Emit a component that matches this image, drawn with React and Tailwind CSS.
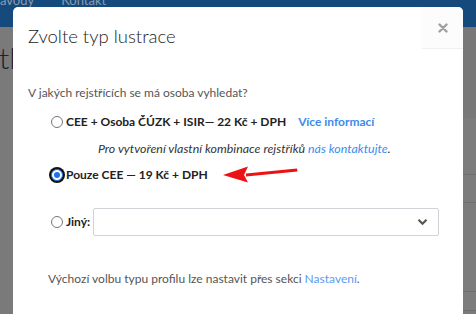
import React from "react";

function Radio({ checked }) {
  if (checked) {
    return (
      <span className="w-[17px] flex justify-center shrink-0">
        <span className="w-[16px] h-[16px] rounded-full bg-[#111] flex items-center justify-center">
          <span className="w-[12px] h-[12px] rounded-full bg-white border-[1.5px] border-[#1a73e8] flex items-center justify-center">
            <span className="w-[6px] h-[6px] rounded-full bg-[#1a73e8]"></span>
          </span>
        </span>
      </span>
    );
  }
  return (
    <span className="w-[17px] flex justify-center shrink-0">
      <span className="w-[12px] h-[12px] rounded-full bg-white border border-[#767676]"></span>
    </span>
  );
}

export default function App() {
  return (
    <div className="relative w-[476px] h-[314px] overflow-hidden bg-[#7a7a7a] font-['Lato','Open_Sans',sans-serif]">
      {/* background page (dimmed) */}
      <div className="h-[27px] bg-[#164a7c] flex items-start text-[13px] text-[#8a9cb0]">
        <span className="mt-[-9px]">ávody</span>
        <span className="mt-[-9px] ml-[27px]">Kontakt</span>
      </div>
      <div className="flex">
        <div className="text-[30px] font-light leading-[40px] text-[#1b2230] mt-[10px] ml-[-1px]">tl</div>
        <div className="flex-1"></div>
        <div className="w-[13px] flex flex-col">
          <div className="h-[91px] bg-[#787878]"></div>
          <div className="h-[57px] bg-[#7c7c7c] border-b border-[#6e6e6e]"></div>
          <div className="h-[28px] bg-[#7c7c7c] border-b border-[#6e6e6e]"></div>
          <div className="h-[89px] bg-[#7c7c7c] border-b border-[#6e6e6e]"></div>
          <div className="h-[19px] bg-[#7c7c7c] border-b border-[#6e6e6e]"></div>
        </div>
      </div>

      {/* modal */}
      <div className="absolute left-[13px] top-[7px] w-[450px] h-[330px] bg-white rounded-[5px] text-[12px]">
        <div className="flex items-start justify-between">
          <div className="pt-[15px] pl-[15px] text-[18.5px] leading-[28px] font-light text-[#222]">
            Zvolte typ lustrace
          </div>
          <div className="w-[41px] h-[42px] bg-[#fcfcfc] border-b border-[#f0f0f0] rounded-tr-[5px] flex items-center justify-center">
            <svg width="10" height="10" viewBox="0 0 10 10">
              <path d="M1.5 1.5 L8.5 8.5 M8.5 1.5 L1.5 8.5" stroke="#a0a0a0" strokeWidth="2.4" strokeLinecap="round" />
            </svg>
          </div>
        </div>

        <div className="px-[15px]">
          <div className="mt-[34px] leading-[18px] text-[#555]">
            V jakých rejstřících se má osoba vyhledat?
          </div>

          <div className="pl-[20px]">
            <div className="mt-[11px] flex items-center leading-[18px]">
              <Radio />
              <span className="ml-[1px] font-bold text-[#222]">CEE + Osoba ČÚZK + ISIR— 22 Kč + DPH</span>
              <span className="ml-[12px] font-bold text-[#3b8ced]">Více informací</span>
            </div>
            <div className="mt-[9px] pl-[50px] italic text-[12.4px] leading-[18px] text-[#333]">
              Pro vytvoření vlastní kombinace rejstříků <span className="text-[#3b8ced]">nás kontaktujte</span>.
            </div>
            <div className="mt-[8px] flex items-center leading-[18px]">
              <Radio checked />
              <span className="ml-[1px] font-bold text-[#222]">Pouze CEE — 19 Kč + DPH</span>
            </div>
            <div className="mt-[24px] flex items-center">
              <Radio />
              <span className="ml-[1px] font-bold text-[#222] leading-[18px]">Jiný:</span>
              <div className="ml-[3px] w-[346px] h-[28px] border border-[#cfd3d8] rounded-[2px] flex items-center justify-end pr-[10px]">
                <svg width="11" height="8" viewBox="0 0 11 8">
                  <path d="M1.5 1.8 L5.5 5.8 L9.5 1.8" stroke="#555" strokeWidth="2.2" fill="none" />
                </svg>
              </div>
            </div>
            <div className="mt-[34px] leading-[18px] text-[#555]">
              Výchozí volbu typu profilu lze nastavit přes sekci <span className="text-[#5a9cf2]">Nastavení</span>.
            </div>
          </div>
        </div>
      </div>

      {/* red annotation arrow */}
      <svg className="absolute left-[222px] top-[164px]" width="78" height="20" viewBox="0 0 78 20">
        <path d="M24 9.5 L75 4.5 L75.5 7.5 L24 12.5 Z" fill="#ee1111" />
        <path d="M1 11 L26 2.5 L22 11 L26 18.5 Z" fill="#ee1111" />
      </svg>
    </div>
  );
}
